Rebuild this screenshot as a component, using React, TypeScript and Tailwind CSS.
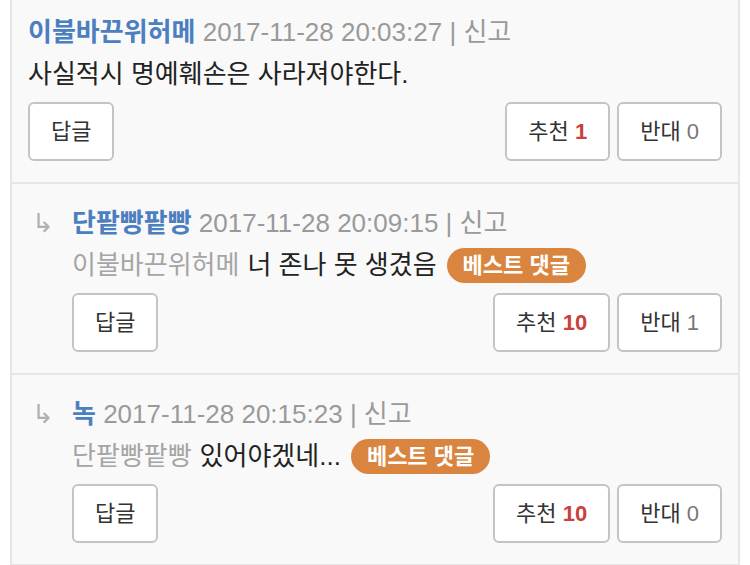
import React from "react";

type Comment = {
  name: string;
  date: string;
  replyTo?: string;
  body: string;
  best?: boolean;
  up: number;
  down: number;
};

const COMMENTS: Comment[] = [
  { name: "이불바끈위허메", date: "2017-11-28 20:03:27", body: "사실적시 명예훼손은 사라져야한다.", up: 1, down: 0 },
  { name: "단팥빵팥빵", date: "2017-11-28 20:09:15", replyTo: "이불바끈위허메", body: "너 존나 못 생겼음", best: true, up: 10, down: 1 },
  { name: "녹", date: "2017-11-28 20:15:23", replyTo: "단팥빵팥빵", body: "있어야겠네...", best: true, up: 10, down: 0 },
];

const FONT = "font-['Liberation_Sans','Noto_Sans_CJK_KR',sans-serif]";

function Btn({ children }: { children: React.ReactNode }) {
  return (
    <button className="h-[59px] px-[21px] rounded-md border-2 border-[#c4c4c4] bg-white text-[22px] text-[#333] leading-none whitespace-nowrap">
      {children}
    </button>
  );
}

function CommentRow({ c, first }: { c: Comment; first?: boolean }) {
  const isReply = !!c.replyTo;
  return (
    <div className={`flex px-4 pb-[21px] border-b-2 border-[#e6e6e6] ${first ? "pt-[11px]" : "pt-[18px]"}`}>
      {isReply && (
        <div className="w-[44px] shrink-0 pl-[4px] text-[26px] leading-[42px] text-[#b0b0b0]">↳</div>
      )}
      <div className="flex-1 min-w-0">
        <div className="leading-[42px] text-[26px] whitespace-nowrap">
          <span className="font-bold text-[#4b7fbf]">{c.name}</span>
          <span className="text-[#9a9a9a]"> {c.date} | 신고</span>
        </div>
        <div className="flex items-center leading-[42px] text-[26px] whitespace-nowrap">
          {c.replyTo && <span className="text-[#a5a5a5] mr-[8px]">{c.replyTo}</span>}
          <span className="text-[#222]">{c.body}</span>
          {c.best && (
            <span className="ml-[10px] h-[35px] px-[16px] rounded-full bg-[#d9853f] text-white font-bold text-[22px] leading-[35px]">
              베스트 댓글
            </span>
          )}
        </div>
        <div className="flex justify-between mt-[7px]">
          <Btn>답글</Btn>
          <div className="flex gap-[7px]">
            <Btn>
              추천 <span className="font-bold text-[#c9403c]">{c.up}</span>
            </Btn>
            <Btn>
              반대 <span className="text-[#777]">{c.down}</span>
            </Btn>
          </div>
        </div>
      </div>
    </div>
  );
}

export default function App() {
  return (
    <div className={`w-[750px] h-[565px] overflow-hidden bg-white ${FONT}`}>
      <div className="ml-[10px] w-[730px] min-h-full border-x-2 border-[#e6e6e6] bg-[#f9f9f9]">
        {COMMENTS.map((c, i) => (
          <CommentRow key={i} c={c} first={i === 0} />
        ))}
      </div>
    </div>
  );
}
